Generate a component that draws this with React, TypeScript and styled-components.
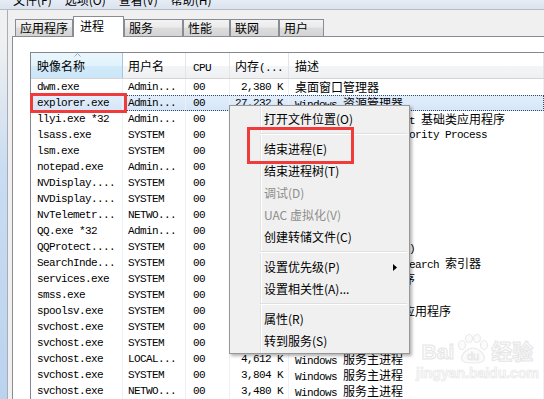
import React from "react";
import styled, { createGlobalStyle, css } from "styled-components";

const GlobalStyle = createGlobalStyle`
  html, body {
    margin: 0;
    padding: 0;
  }

  body {
    width: 544px;
    height: 399px;
    overflow: hidden;
    background: #f0f0f0;
    font-family: "Noto Sans CJK SC", sans-serif;
  }
`;

type Row = {
    name: string;
    user: string;
    cpu: string;
    mem: string;
    desc: string;
};

const rows: Row[] = [
    { name: "dwm.exe", user: "Admin...", cpu: "00", mem: "2,380 K", desc: "桌面窗口管理器" },
    { name: "explorer.exe", user: "Admin...", cpu: "00", mem: "27,232 K", desc: "Windows 资源管理器" },
    { name: "llyi.exe *32", user: "Admin...", cpu: "00", mem: "9,816 K", desc: "联想一键通 Microsoft 基础类应用程序" },
    { name: "lsass.exe", user: "SYSTEM", cpu: "00", mem: "3,452 K", desc: "Local Security Authority Process" },
    { name: "lsm.exe", user: "SYSTEM", cpu: "00", mem: "1,336 K", desc: "本地会话管理器服务" },
    { name: "notepad.exe", user: "Admin...", cpu: "00", mem: "1,048 K", desc: "记事本" },
    { name: "NVDisplay....", user: "SYSTEM", cpu: "00", mem: "2,160 K", desc: "NVIDIA Display" },
    { name: "NVDisplay....", user: "SYSTEM", cpu: "00", mem: "4,904 K", desc: "NVIDIA Display" },
    { name: "NvTelemetr...", user: "NETWO...", cpu: "00", mem: "2,716 K", desc: "NVIDIA Telemetry" },
    { name: "QQ.exe *32", user: "Admin...", cpu: "00", mem: "125,648 K", desc: "腾讯QQ" },
    { name: "QQProtect....", user: "SYSTEM", cpu: "00", mem: "6,228 K", desc: "QQ安全防护进程 (Q盾)" },
    { name: "SearchInde...", user: "SYSTEM", cpu: "00", mem: "8,932 K", desc: "Microsoft Windows Search 索引器" },
    { name: "services.exe", user: "SYSTEM", cpu: "00", mem: "3,980 K", desc: "服务和控制器应用程序" },
    { name: "smss.exe", user: "SYSTEM", cpu: "00", mem: "332 K", desc: "Windows 会话管理器" },
    { name: "spoolsv.exe", user: "SYSTEM", cpu: "00", mem: "4,620 K", desc: "后台处理程序子系统应用程序" },
    { name: "svchost.exe", user: "SYSTEM", cpu: "00", mem: "3,064 K", desc: "Windows 服务主进程" },
    { name: "svchost.exe", user: "SYSTEM", cpu: "00", mem: "5,212 K", desc: "Windows 服务主进程" },
    { name: "svchost.exe", user: "LOCAL...", cpu: "00", mem: "4,612 K", desc: "Windows 服务主进程" },
    { name: "svchost.exe", user: "SYSTEM", cpu: "00", mem: "3,804 K", desc: "Windows 服务主进程" },
    { name: "svchost.exe", user: "NETWO...", cpu: "00", mem: "3,480 K", desc: "Windows 服务主进程" },
];

const tabs = [
    { label: "应用程序", width: 58 },
    { label: "进程", width: 51, active: true },
    { label: "服务", width: 59 },
    { label: "性能", width: 47 },
    { label: "联网", width: 49 },
    { label: "用户", width: 45 },
];

type Column = { width: number; align: "left" | "right"; pad: string };

const columns: Column[] = [
    { width: 92, align: "left", pad: "0 0 0 6px" },
    { width: 63, align: "left", pad: "0 0 0 5px" },
    { width: 44, align: "left", pad: "0 0 0 7px" },
    { width: 59, align: "right", pad: "0 5px 0 0" },
    { width: 0, align: "left", pad: "0 0 0 6px" },
];

type MenuEntry = { label: string; disabled?: boolean; submenu?: boolean } | "sep";

const menu: MenuEntry[] = [
    { label: "打开文件位置(O)" },
    "sep",
    { label: "结束进程(E)" },
    { label: "结束进程树(T)" },
    { label: "调试(D)", disabled: true },
    { label: "UAC 虚拟化(V)", disabled: true },
    { label: "创建转储文件(C)" },
    "sep",
    { label: "设置优先级(P)", submenu: true },
    { label: "设置相关性(A)..." },
    "sep",
    { label: "属性(R)" },
    { label: "转到服务(S)" },
];

function MixedText({ text }: { text: string }) {
    const parts = text.split(/([\u3400-\u9fff]+)/);
    return (
        <>
            {parts.map((part, i) => i % 2 === 1 ? <Han key={i}>{part}</Han> : part)}
        </>
    );
}

export default function App() {
    const rowValues = (row: Row) => [row.name, row.user, row.cpu, row.mem, row.desc];

    return (
        <>
            <GlobalStyle />
            <Window>
                <MenuBar>
                    <MenuBarItem>文件(F)</MenuBarItem>
                    <MenuBarItem>选项(O)</MenuBarItem>
                    <MenuBarItem>查看(V)</MenuBarItem>
                    <MenuBarItem>帮助(H)</MenuBarItem>
                </MenuBar>

                <Body>
                    <Frame />
                    <Main>
                        <TabStrip>
                            {tabs.map(tab =>
                                <Tab key={tab.label} $width={tab.width} $active={!!tab.active}>{tab.label}</Tab>
                            )}
                        </TabStrip>

                        <Panel>
                            <ListView>
                                <Header>
                                    <HeaderCell $col={columns[0]} $sorted>
                                        <SortArrow width="7" height="4" viewBox="0 0 7 4">
                                            <path d="M0.5 3.5 L3.5 0.5 L6.5 3.5" fill="none" stroke="#97a9c0" strokeWidth="1" />
                                        </SortArrow>
                                        映像名称
                                    </HeaderCell>
                                    <HeaderCell $col={columns[1]}>用户名</HeaderCell>
                                    <HeaderCell $col={columns[2]}><Mono>CPU</Mono></HeaderCell>
                                    <HeaderCell $col={columns[3]}>内存<Mono>(...</Mono></HeaderCell>
                                    <HeaderCell $col={columns[4]}>描述</HeaderCell>
                                </Header>

                                {rows.map((row, i) =>
                                    <ListRow key={i} $selected={i === 1}>
                                        {rowValues(row).map((value, c) =>
                                            <Cell key={c} $col={columns[c]}>
                                                <MixedText text={value} />
                                            </Cell>
                                        )}
                                    </ListRow>
                                )}
                            </ListView>
                        </Panel>
                    </Main>
                </Body>

                <ContextMenu>
                    {menu.map((entry, i) =>
                        entry === "sep" ?
                            <MenuSeparator key={i} />
                        :
                            <MenuItem key={i} $disabled={!!entry.disabled}>
                                {entry.label}
                                {entry.submenu &&
                                    <SubArrow width="4" height="7" viewBox="0 0 4 7">
                                        <path d="M0 0 L4 3.5 L0 7 Z" fill="#000" />
                                    </SubArrow>
                                }
                            </MenuItem>
                    )}
                </ContextMenu>

                <Highlight $x={30} $y={93} $w={97} $h={20} />
                <Highlight $x={247} $y={127} $w={107} $h={37} />

                <Watermark>
                    <WatermarkLogo>
                        <WatermarkWord>Bai</WatermarkWord>
                        <Paw width="34" height="30" viewBox="0 0 34 30">
                            <g fill="#fbfbfb" stroke="#ebebeb" strokeWidth="1.2">
                                <ellipse cx="6" cy="11" rx="3.5" ry="4.5" />
                                <ellipse cx="13" cy="4.5" rx="3.5" ry="4" />
                                <ellipse cx="21" cy="4.5" rx="3.5" ry="4" />
                                <ellipse cx="28" cy="11" rx="3.5" ry="4.5" />
                                <path d="M6 26 C4 20 12 14 17 14 C22 14 30 20 28 26 C26 30 8 30 6 26 Z" />
                            </g>
                            <text x="17" y="26" textAnchor="middle" fontSize="11" fontFamily="Liberation Sans, sans-serif" fill="#fbfbfb" stroke="#e8e8e8" strokeWidth="0.8">du</text>
                        </Paw>
                        <WatermarkWord>经验</WatermarkWord>
                    </WatermarkLogo>
                    <WatermarkUrl>jingyan.baidu.com</WatermarkUrl>
                </Watermark>
            </Window>
        </>
    );
}

const Window = styled.div`
    position: relative;
    width: 544px;
    height: 399px;
    overflow: hidden;

    display: flex;
    flex-direction: column;

    background: #f0f0f0;
`;

const MenuBar = styled.div`
    height: 9px;
    overflow: hidden;

    display: flex;
    gap: 13px;
    padding-left: 13px;

    background: linear-gradient(#e6ecf5, #dbe3ef);
    border-bottom: 1px solid #b9bec6;
`;

const MenuBarItem = styled.div`
    margin-top: -8px;

    color: #000;
    font-size: 12px;
    line-height: 16px;
    white-space: nowrap;
`;

const Body = styled.div`
    flex: 1;
    min-height: 0;

    display: flex;
`;

const Frame = styled.div`
    width: 7px;
    flex-shrink: 0;

    background: linear-gradient(#f0f0f0 0px, #f0f0f0 30px, #c9dcf1 160px, #bcd3ee 100%);
    border-right: 1px solid #a6adb8;
`;

const Main = styled.div`
    flex: 1;
    min-width: 0;

    display: flex;
    flex-direction: column;

    padding-left: 4px;
`;

const TabStrip = styled.div`
    height: 26px;
    flex-shrink: 0;

    display: flex;
    align-items: flex-end;

    padding-left: 3px;
`;

const Tab = styled.div<{ $width: number; $active: boolean }>`
    box-sizing: border-box;
    width: ${p => p.$width}px;
    height: 17px;

    padding-left: 4px;

    border: 1px solid #898c95;
    border-bottom: none;
    background: linear-gradient(#f3f3f3 0%, #ebebeb 45%, #dcdcdc 50%, #d4d4d4 100%);

    color: #000;
    font-size: 12px;
    line-height: 15px;
    white-space: nowrap;

    ${p => p.$active && css`
        position: relative;
        z-index: 1;
        height: 21px;
        margin-bottom: -1px;
        padding-left: 6px;
        background: #ffffff;
        line-height: 18px;
    `}
`;

const Panel = styled.div`
    flex: 1;
    min-height: 0;

    padding: 15px 0 0 17px;

    background: #ffffff;
    border-top: 1px solid #898c95;
    border-left: 1px solid #898c95;
`;

const ListView = styled.div`
    height: 100%;

    display: flex;
    flex-direction: column;

    background: #ffffff;
    border-top: 1px solid #828790;
    border-left: 1px solid #828790;
`;

const Header = styled.div`
    height: 25px;
    flex-shrink: 0;

    display: flex;

    background: linear-gradient(#ffffff 0%, #ffffff 50%, #f4f5f7 51%, #eef0f2 100%);
    border-bottom: 1px solid #d5d5d5;
`;

const cellBox = css<{ $col: Column }>`
    box-sizing: border-box;
    ${p => p.$col.width ? `width: ${p.$col.width}px; flex-shrink: 0;` : "flex: 1; min-width: 0;"}
    padding: ${p => p.$col.pad};
    text-align: ${p => p.$col.align};
    white-space: nowrap;
    overflow: hidden;
`;

const HeaderCell = styled.div<{ $col: Column; $sorted?: boolean }>`
    ${cellBox}
    position: relative;

    border-right: 1px solid #e2e5ea;

    color: #000;
    font-size: 12px;
    line-height: 25px;

    ${p => p.$sorted && css`
        background: linear-gradient(#eaf6fd 0%, #e2f2fc 50%, #d2eafa 51%, #cce6f9 100%);
        border-right-color: #a6c6e0;
    `}
`;

const SortArrow = styled.svg`
    position: absolute;
    top: 0;
    left: 43px;
`;

const Mono = styled.span`
    font-family: "Liberation Mono", monospace;
    font-size: 11px;
    letter-spacing: -0.6px;
`;

const Han = styled.span`
    font-family: "Noto Sans CJK SC", sans-serif;
    font-size: 12px;
    letter-spacing: 0;
`;

const ListRow = styled.div<{ $selected: boolean }>`
    height: 16px;
    flex-shrink: 0;

    display: flex;

    ${p => p.$selected && css`
        background: linear-gradient(#e3eefb, #d5e6f8);
        outline: 1px dotted #304a70;
        outline-offset: -1px;
    `}
`;

const Cell = styled.div<{ $col: Column }>`
    ${cellBox}

    border-right: 1px solid #edf0f4;

    color: #000;
    font-family: "Liberation Mono", monospace;
    font-size: 11px;
    letter-spacing: -0.6px;
    line-height: 16px;
`;

const ContextMenu = styled.div`
    position: absolute;
    left: 229px;
    top: 105px;
    width: 181px;
    box-sizing: border-box;

    display: flex;
    flex-direction: column;

    padding: 2px 2px 1px 2px;

    background:
        linear-gradient(to right, transparent 30px, #e2e3e3 30px, #e2e3e3 31px, #ffffff 31px, #ffffff 32px, transparent 32px),
        #f0f0f0;
    border: 1px solid #979797;
    box-shadow: 2px 2px 3px rgba(0, 0, 0, 0.3);
`;

const MenuItem = styled.div<{ $disabled: boolean }>`
    height: 22px;

    display: flex;
    align-items: center;

    padding: 0 10px 0 32px;

    color: ${p => p.$disabled ? "#8d8d8d" : "#000"};
    font-size: 12px;
    line-height: 22px;
    white-space: nowrap;
`;

const SubArrow = styled.svg`
    margin-left: auto;
`;

const MenuSeparator = styled.div`
    height: 8px;

    display: flex;
    align-items: center;

    margin-left: 28px;

    &::before {
        content: "";
        flex: 1;
        height: 1px;
        background: #e0e0e0;
        border-bottom: 1px solid #ffffff;
    }
`;

const Highlight = styled.div<{ $x: number; $y: number; $w: number; $h: number }>`
    position: absolute;
    left: ${p => p.$x}px;
    top: ${p => p.$y}px;
    width: ${p => p.$w}px;
    height: ${p => p.$h}px;
    box-sizing: border-box;

    border: 3px solid #f03b3b;
    pointer-events: none;
`;

const Watermark = styled.div`
    position: absolute;
    left: 416px;
    top: 334px;

    display: flex;
    flex-direction: column;
    align-items: center;
    gap: 1px;

    pointer-events: none;
`;

const WatermarkLogo = styled.div`
    display: flex;
    align-items: flex-end;
`;

const WatermarkWord = styled.span`
    color: #fbfbfb;
    font-family: "Liberation Sans", "Noto Sans CJK SC", sans-serif;
    font-size: 21px;
    font-weight: 700;
    line-height: 24px;
    -webkit-text-stroke: 1px #e6e6e6;
`;

const Paw = styled.svg`
    margin: 0 1px 0 2px;
`;

const WatermarkUrl = styled.span`
    color: #fafafa;
    font-family: "Liberation Sans", sans-serif;
    font-size: 14px;
    font-weight: 700;
    line-height: 16px;
    -webkit-text-stroke: 0.7px #e8e8e8;
`;
